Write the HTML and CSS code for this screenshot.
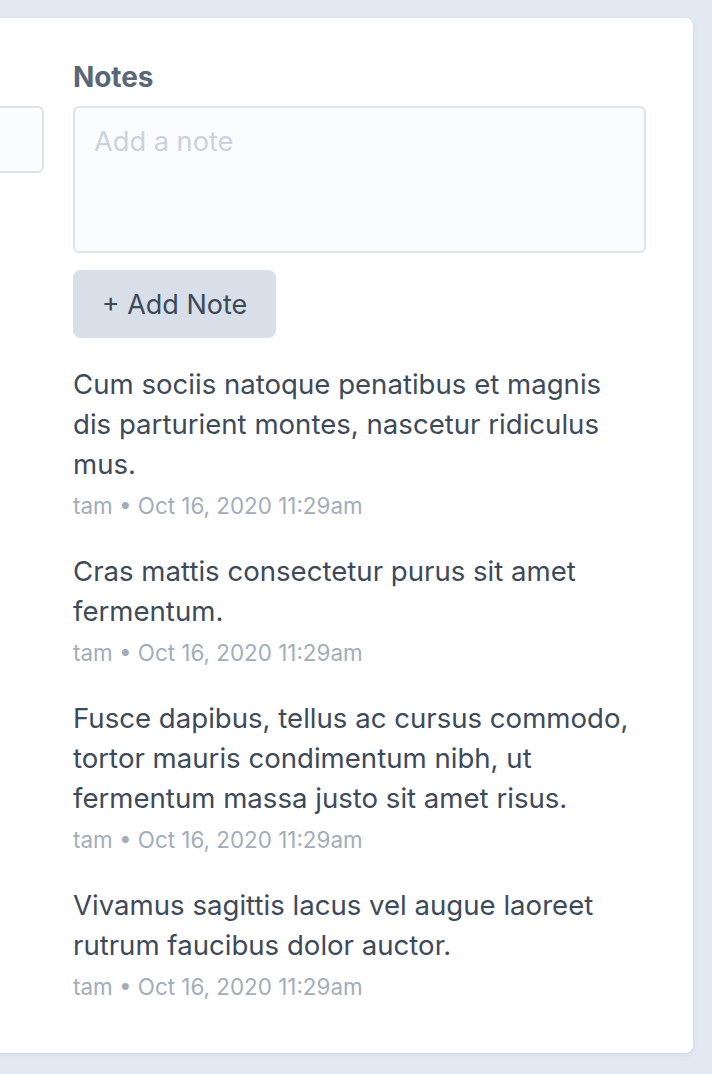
FILE: index.html
```html
<!DOCTYPE html>
<html lang="en">
<head>
<meta charset="utf-8">
<title>Notes</title>
<link rel="stylesheet" href="styles.css">
</head>
<body>
<div class="page">
  <div class="card">
    <div class="col col-left">
      <div class="label-spacer"></div>
      <div class="input"></div>
    </div>
    <div class="col col-notes">
      <h2 class="heading">Notes</h2>
      <textarea class="note-input" placeholder="Add a note"></textarea>
      <button class="add-btn" type="button">+ Add Note</button>
      <ul class="notes">
        <li class="note">
          <p class="note-text">Cum sociis natoque penatibus et magnis dis parturient montes, nascetur ridiculus mus.</p>
          <div class="note-meta">tam • Oct 16, 2020 11:29am</div>
        </li>
        <li class="note">
          <p class="note-text">Cras mattis consectetur purus sit amet fermentum.</p>
          <div class="note-meta">tam • Oct 16, 2020 11:29am</div>
        </li>
        <li class="note">
          <p class="note-text">Fusce dapibus, tellus ac cursus commodo, tortor mauris condimentum nibh, ut fermentum massa justo sit amet risus.</p>
          <div class="note-meta">tam • Oct 16, 2020 11:29am</div>
        </li>
        <li class="note">
          <p class="note-text">Vivamus sagittis lacus vel augue laoreet rutrum faucibus dolor auctor.</p>
          <div class="note-meta">tam • Oct 16, 2020 11:29am</div>
        </li>
      </ul>
    </div>
  </div>
</div>
</body>
</html>
```

FILE: styles.css
```css
html, body {
  margin: 0;
  padding: 0;
}

body {
  background: #e2e9f2;
  font-family: Inter, "Noto Sans", sans-serif;
  overflow: hidden;
}

.page {
  padding: 18px 19px 22px 0;
}

.card {
  margin-left: -400px;
  background: #ffffff;
  border-radius: 8px;
  box-shadow: 0 1px 3px rgba(30, 50, 90, 0.08), 0 2px 8px rgba(30, 50, 90, 0.04);
  padding: 43px 47px 52px 40px;
  display: grid;
  grid-template-columns: 1fr 573px;
  column-gap: 29px;
}

.label-spacer {
  height: 45px;
}

.input {
  height: 67px;
  box-sizing: border-box;
  border: 2px solid #dde3ec;
  border-radius: 6px;
  background: #fbfcfe;
}

.heading {
  margin: 0 0 13px;
  font-size: 28px;
  line-height: 32px;
  font-weight: 700;
  color: #5a6777;
  letter-spacing: -0.1px;
}

.note-input {
  display: block;
  width: 100%;
  height: 147px;
  box-sizing: border-box;
  margin: 0;
  border: 2px solid #dde3ec;
  border-radius: 6px;
  background: #fafbfd;
  padding: 16px 19px;
  font-family: inherit;
  font-size: 27.2px;
  line-height: 36px;
  color: #3e4a5a;
  resize: none;
  outline: none;
}

.note-input::placeholder {
  color: #cbd2dc;
}

.add-btn {
  display: block;
  margin: 17px 0 0;
  width: 203px;
  height: 68px;
  border: 0;
  border-radius: 8px;
  background: #d8dfe8;
  font-family: inherit;
  font-size: 27px;
  color: #3d4958;
  padding: 0;
}

.notes {
  list-style: none;
  margin: 26px 0 0;
  padding: 0;
  max-width: 565px;
  display: flex;
  flex-direction: column;
  gap: 31px;
}

.note-text {
  margin: 0;
  font-size: 27.6px;
  line-height: 40px;
  color: #3e4a5a;
}

.note-meta {
  margin-top: 8px;
  font-size: 22.4px;
  line-height: 28px;
  color: #a3adba;
}
```
